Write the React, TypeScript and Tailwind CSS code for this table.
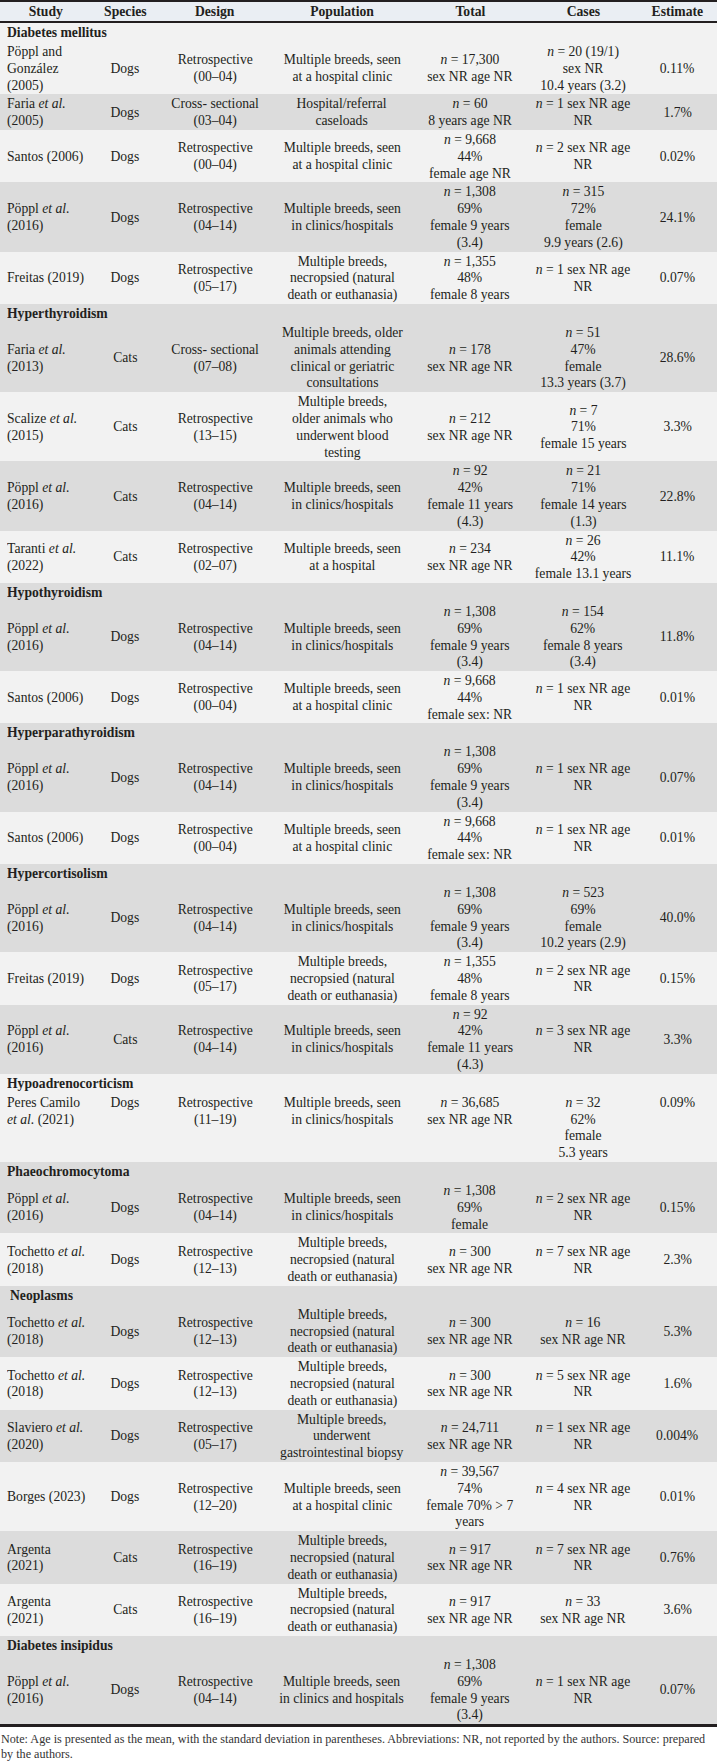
import type { ReactNode } from 'react';

type Row = {
    study: ReactNode[];
    species: string;
    design: string[];
    population: string[];
    total: ReactNode[];
    cases: ReactNode[];
    estimate: string;
    top?: boolean;
};

type Group = { title: string; indent?: boolean; rows: Row[] };

const n = (rest: string) => (
    <>
        <i>n</i>
        {` = ${rest}`}
    </>
);

const etal = (name: string) => (
    <>
        {name} <i>et al.</i>
    </>
);

const seenClinics = ['Multiple breeds, seen', 'in clinics/hospitals'];
const seenHospital = ['Multiple breeds, seen', 'at a hospital clinic'];
const necropsied = ['Multiple breeds,', 'necropsied (natural', 'death or euthanasia)'];
const sexAgeNR = (count: string) => [n(`${count} sex NR age`), 'NR'];
const poppl1308 = [n('1,308'), '69%', 'female 9 years', '(3.4)'];

const groups: Group[] = [
    {
        title: 'Diabetes mellitus',
        rows: [
            {
                study: ['Pöppl and', 'González', '(2005)'],
                species: 'Dogs',
                design: ['Retrospective', '(00–04)'],
                population: seenHospital,
                total: [n('17,300'), 'sex NR age NR'],
                cases: [n('20 (19/1)'), 'sex NR', '10.4 years (3.2)'],
                estimate: '0.11%',
            },
            {
                study: [etal('Faria'), '(2005)'],
                species: 'Dogs',
                design: ['Cross- sectional', '(03–04)'],
                population: ['Hospital/referral', 'caseloads'],
                total: [n('60'), '8 years age NR'],
                cases: sexAgeNR('1'),
                estimate: '1.7%',
            },
            {
                study: ['Santos (2006)'],
                species: 'Dogs',
                design: ['Retrospective', '(00–04)'],
                population: seenHospital,
                total: [n('9,668'), '44%', 'female age NR'],
                cases: sexAgeNR('2'),
                estimate: '0.02%',
            },
            {
                study: [etal('Pöppl'), '(2016)'],
                species: 'Dogs',
                design: ['Retrospective', '(04–14)'],
                population: seenClinics,
                total: poppl1308,
                cases: [n('315'), '72%', 'female', '9.9 years (2.6)'],
                estimate: '24.1%',
            },
            {
                study: ['Freitas (2019)'],
                species: 'Dogs',
                design: ['Retrospective', '(05–17)'],
                population: necropsied,
                total: [n('1,355'), '48%', 'female 8 years'],
                cases: sexAgeNR('1'),
                estimate: '0.07%',
            },
        ],
    },
    {
        title: 'Hyperthyroidism',
        rows: [
            {
                study: [etal('Faria'), '(2013)'],
                species: 'Cats',
                design: ['Cross- sectional', '(07–08)'],
                population: ['Multiple breeds, older', 'animals attending', 'clinical or geriatric', 'consultations'],
                total: [n('178'), 'sex NR age NR'],
                cases: [n('51'), '47%', 'female', '13.3 years (3.7)'],
                estimate: '28.6%',
            },
            {
                study: [etal('Scalize'), '(2015)'],
                species: 'Cats',
                design: ['Retrospective', '(13–15)'],
                population: ['Multiple breeds,', 'older animals who', 'underwent blood', 'testing'],
                total: [n('212'), 'sex NR age NR'],
                cases: [n('7'), '71%', 'female 15 years'],
                estimate: '3.3%',
            },
            {
                study: [etal('Pöppl'), '(2016)'],
                species: 'Cats',
                design: ['Retrospective', '(04–14)'],
                population: seenClinics,
                total: [n('92'), '42%', 'female 11 years', '(4.3)'],
                cases: [n('21'), '71%', 'female 14 years', '(1.3)'],
                estimate: '22.8%',
            },
            {
                study: [etal('Taranti'), '(2022)'],
                species: 'Cats',
                design: ['Retrospective', '(02–07)'],
                population: ['Multiple breeds, seen', 'at a hospital'],
                total: [n('234'), 'sex NR age NR'],
                cases: [n('26'), '42%', 'female 13.1 years'],
                estimate: '11.1%',
            },
        ],
    },
    {
        title: 'Hypothyroidism',
        rows: [
            {
                study: [etal('Pöppl'), '(2016)'],
                species: 'Dogs',
                design: ['Retrospective', '(04–14)'],
                population: seenClinics,
                total: poppl1308,
                cases: [n('154'), '62%', 'female 8 years', '(3.4)'],
                estimate: '11.8%',
            },
            {
                study: ['Santos (2006)'],
                species: 'Dogs',
                design: ['Retrospective', '(00–04)'],
                population: seenHospital,
                total: [n('9,668'), '44%', 'female sex: NR'],
                cases: sexAgeNR('1'),
                estimate: '0.01%',
            },
        ],
    },
    {
        title: 'Hyperparathyroidism',
        rows: [
            {
                study: [etal('Pöppl'), '(2016)'],
                species: 'Dogs',
                design: ['Retrospective', '(04–14)'],
                population: seenClinics,
                total: poppl1308,
                cases: sexAgeNR('1'),
                estimate: '0.07%',
            },
            {
                study: ['Santos (2006)'],
                species: 'Dogs',
                design: ['Retrospective', '(00–04)'],
                population: seenHospital,
                total: [n('9,668'), '44%', 'female sex: NR'],
                cases: sexAgeNR('1'),
                estimate: '0.01%',
            },
        ],
    },
    {
        title: 'Hypercortisolism',
        rows: [
            {
                study: [etal('Pöppl'), '(2016)'],
                species: 'Dogs',
                design: ['Retrospective', '(04–14)'],
                population: seenClinics,
                total: poppl1308,
                cases: [n('523'), '69%', 'female', '10.2 years (2.9)'],
                estimate: '40.0%',
            },
            {
                study: ['Freitas (2019)'],
                species: 'Dogs',
                design: ['Retrospective', '(05–17)'],
                population: necropsied,
                total: [n('1,355'), '48%', 'female 8 years'],
                cases: sexAgeNR('2'),
                estimate: '0.15%',
            },
            {
                study: [etal('Pöppl'), '(2016)'],
                species: 'Cats',
                design: ['Retrospective', '(04–14)'],
                population: seenClinics,
                total: [n('92'), '42%', 'female 11 years', '(4.3)'],
                cases: sexAgeNR('3'),
                estimate: '3.3%',
            },
        ],
    },
    {
        title: 'Hypoadrenocorticism',
        rows: [
            {
                study: ['Peres Camilo', <><i>et al.</i> (2021)</>],
                species: 'Dogs',
                design: ['Retrospective', '(11–19)'],
                population: seenClinics,
                total: [n('36,685'), 'sex NR age NR'],
                cases: [n('32'), '62%', 'female', '5.3 years'],
                estimate: '0.09%',
                top: true,
            },
        ],
    },
    {
        title: 'Phaeochromocytoma',
        rows: [
            {
                study: [etal('Pöppl'), '(2016)'],
                species: 'Dogs',
                design: ['Retrospective', '(04–14)'],
                population: seenClinics,
                total: [n('1,308'), '69%', 'female'],
                cases: sexAgeNR('2'),
                estimate: '0.15%',
            },
            {
                study: [etal('Tochetto'), '(2018)'],
                species: 'Dogs',
                design: ['Retrospective', '(12–13)'],
                population: necropsied,
                total: [n('300'), 'sex NR age NR'],
                cases: sexAgeNR('7'),
                estimate: '2.3%',
            },
        ],
    },
    {
        title: 'Neoplasms',
        indent: true,
        rows: [
            {
                study: [etal('Tochetto'), '(2018)'],
                species: 'Dogs',
                design: ['Retrospective', '(12–13)'],
                population: necropsied,
                total: [n('300'), 'sex NR age NR'],
                cases: [n('16'), 'sex NR age NR'],
                estimate: '5.3%',
            },
            {
                study: [etal('Tochetto'), '(2018)'],
                species: 'Dogs',
                design: ['Retrospective', '(12–13)'],
                population: necropsied,
                total: [n('300'), 'sex NR age NR'],
                cases: sexAgeNR('5'),
                estimate: '1.6%',
            },
            {
                study: [etal('Slaviero'), '(2020)'],
                species: 'Dogs',
                design: ['Retrospective', '(05–17)'],
                population: ['Multiple breeds,', 'underwent', 'gastrointestinal biopsy'],
                total: [n('24,711'), 'sex NR age NR'],
                cases: sexAgeNR('1'),
                estimate: '0.004%',
            },
            {
                study: ['Borges (2023)'],
                species: 'Dogs',
                design: ['Retrospective', '(12–20)'],
                population: seenHospital,
                total: [n('39,567'), '74%', 'female 70% > 7', 'years'],
                cases: sexAgeNR('4'),
                estimate: '0.01%',
            },
            {
                study: ['Argenta', '(2021)'],
                species: 'Cats',
                design: ['Retrospective', '(16–19)'],
                population: necropsied,
                total: [n('917'), 'sex NR age NR'],
                cases: sexAgeNR('7'),
                estimate: '0.76%',
            },
            {
                study: ['Argenta', '(2021)'],
                species: 'Cats',
                design: ['Retrospective', '(16–19)'],
                population: necropsied,
                total: [n('917'), 'sex NR age NR'],
                cases: [n('33'), 'sex NR age NR'],
                estimate: '3.6%',
            },
        ],
    },
    {
        title: 'Diabetes insipidus',
        rows: [
            {
                study: [etal('Pöppl'), '(2016)'],
                species: 'Dogs',
                design: ['Retrospective', '(04–14)'],
                population: ['Multiple breeds, seen', 'in clinics and hospitals'],
                total: poppl1308,
                cases: sexAgeNR('1'),
                estimate: '0.07%',
            },
        ],
    },
];

const headers = ['Study', 'Species', 'Design', 'Population', 'Total', 'Cases', 'Estimate'];

// the source table is set in a narrow Times, so squeeze the glyphs a little
function Lines({ items, left = false }: { items: ReactNode[]; left?: boolean }) {
    return (
        <div className={`inline-block scale-x-[0.91] ${left ? 'origin-left' : 'origin-center'}`}>
            {items.map((item, i) => (
                <div key={i} className="whitespace-nowrap">
                    {item}
                </div>
            ))}
        </div>
    );
}

export default function App() {
    let index = 0;

    return (
        <div className="w-[717px] bg-white font-['Liberation_Serif','Times_New_Roman',serif] text-[#231f20]">
            <table className="w-[717px] table-fixed border-collapse text-[15px] leading-[16.8px]">
                <colgroup>
                    <col className="w-[92px]" />
                    <col className="w-[66px]" />
                    <col className="w-[114px]" />
                    <col className="w-[140px]" />
                    <col className="w-[116px]" />
                    <col className="w-[110px]" />
                    <col className="w-[79px]" />
                </colgroup>

                {/* Header */}
                <thead>
                    <tr className="border-y-2 border-[#231f20] bg-[#eaeef3]">
                        {headers.map((h) => (
                            <th key={h} className="h-[21px] p-0 text-center font-bold">
                                <Lines items={[h]} />
                            </th>
                        ))}
                    </tr>
                </thead>

                <tbody>
                    {groups.map((group) => {
                        const groupShade = index % 2 === 0 ? 'bg-[#f2f2f2]' : 'bg-[#dcdcdc]';
                        return [
                            <tr key={group.title} className={groupShade}>
                                <td
                                    colSpan={7}
                                    className={`py-px font-bold leading-[17px] ${group.indent ? 'pl-[10px]' : 'pl-[7px]'}`}
                                >
                                    <Lines items={[group.title]} left />
                                </td>
                            </tr>,
                            ...group.rows.map((row) => {
                                const shade = index % 2 === 0 ? 'bg-[#f2f2f2]' : 'bg-[#dcdcdc]';
                                index += 1;
                                const align = row.top ? 'align-top' : 'align-middle';
                                return (
                                    <tr key={`${group.title}-${index}`} className={shade}>
                                        <td className={`py-px pl-[7px] pr-0 text-left ${align}`}>
                                            <Lines items={row.study} left />
                                        </td>
                                        <td className={`py-px text-center ${align}`}>
                                            <Lines items={[row.species]} />
                                        </td>
                                        <td className={`py-px text-center ${align}`}>
                                            <Lines items={row.design} />
                                        </td>
                                        <td className={`py-px text-center ${align}`}>
                                            <Lines items={row.population} />
                                        </td>
                                        <td className={`py-px text-center ${align}`}>
                                            <Lines items={row.total} />
                                        </td>
                                        <td className={`py-px text-center ${align}`}>
                                            <Lines items={row.cases} />
                                        </td>
                                        <td className={`py-px text-center ${align}`}>
                                            <Lines items={[row.estimate]} />
                                        </td>
                                    </tr>
                                );
                            }),
                        ];
                    })}
                </tbody>
            </table>

            {/* Footnote */}
            <div className="border-t-[3px] border-[#231f20] pl-px pt-[4px] text-[13.5px] leading-[15px] text-[#333]">
                <div className="origin-left scale-x-[0.9] whitespace-nowrap">
                    Note: Age is presented as the mean, with the standard deviation in parentheses. Abbreviations: NR, not reported by the authors. Source: prepared
                </div>
                <div className="origin-left scale-x-[0.9]">by the authors.</div>
            </div>
        </div>
    );
}
